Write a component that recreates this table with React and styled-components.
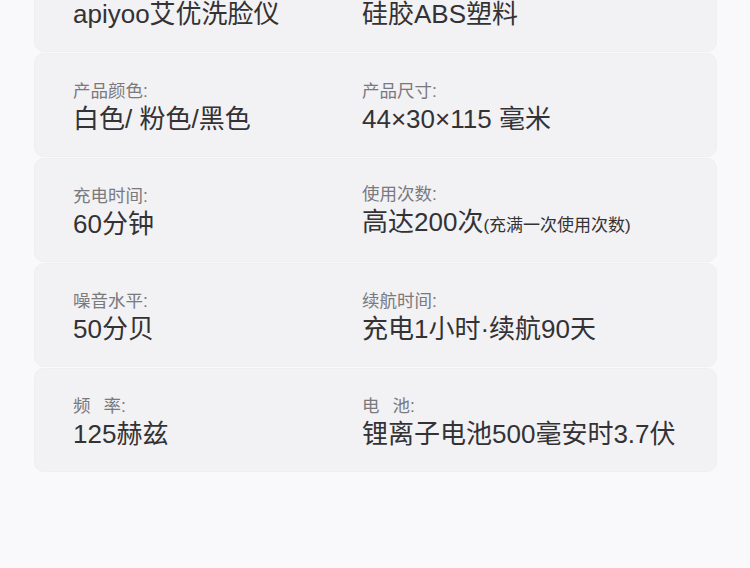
import React from 'react';
import styled, { createGlobalStyle } from 'styled-components';

const GlobalStyle = createGlobalStyle`
    html, body {
        margin: 0;
        padding: 0;
        background: #f9f8fb;
        font-family: 'Liberation Sans', 'Noto Sans CJK SC', sans-serif;
        overflow: hidden;
    }
`;

const specs = [
    [['产品名称:', 'apiyoo艾优洗脸仪'], ['产品材质:', '硅胶ABS塑料']],
    [['产品颜色:', '白色/ 粉色/黑色'], ['产品尺寸:', '44×30×115 毫米']],
    [['充电时间:', '60分钟'], ['使用次数:', '高达200次', '(充满一次使用次数)']],
    [['噪音水平:', '50分贝'], ['续航时间:', '充电1小时·续航90天']],
    [['频|率:', '125赫兹'], ['电|池:', '锂离子电池500毫安时3.7伏']],
];

const Label = ({ text }) => {
    const parts = text.split('|');
    if (parts.length === 1) return <LabelText>{text}</LabelText>;
    return (
        <LabelText>
            {parts[0]}
            <Spacer />
            {parts[1]}
        </LabelText>
    );
};

const App = () => {
    return (
        <>
            <GlobalStyle />
            <Page>
                <List>
                    {specs.map((row, i) => (
                        <Card key={i}>
                            {row.map(([label, value, note], j) => (
                                <Item key={j}>
                                    <Label text={label} />
                                    <Value>
                                        {value}
                                        {note && <Note>{note}</Note>}
                                    </Value>
                                </Item>
                            ))}
                        </Card>
                    ))}
                </List>
            </Page>
        </>
    );
};

export default App;

const Page = styled.div`
    width: 750px;
    height: 568px;
    padding: 0 33px 0 34px;
    box-sizing: border-box;
    overflow: hidden;
`;

const List = styled.div`
    display: flex;
    flex-direction: column;
    gap: 1px;
    margin-top: -52px;
`;

const Card = styled.div`
    height: 104px;
    box-sizing: border-box;
    display: grid;
    grid-template-columns: 289px 1fr;
    align-items: center;
    padding: 4px 0 0 38px;
    background: #f2f1f4;
    border: 1px solid #efeef1;
    border-radius: 10px;
`;

const Item = styled.div`
    display: flex;
    flex-direction: column;
    gap: 3px;
`;

const LabelText = styled.div`
    font-size: 17.5px;
    line-height: 20px;
    color: #7a797c;
    white-space: nowrap;
`;

const Spacer = styled.span`
    display: inline-block;
    width: 13px;
`;

const Value = styled.div`
    font-size: 26px;
    line-height: 30px;
    color: #333235;
    white-space: nowrap;
`;

const Note = styled.span`
    font-size: 17px;
    color: #333235;
`;
